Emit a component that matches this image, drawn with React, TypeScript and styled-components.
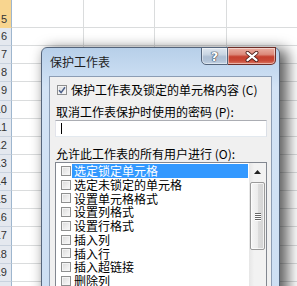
import React from "react";
import styled, { createGlobalStyle } from "styled-components";

const GlobalStyle = createGlobalStyle`
  * { box-sizing: border-box; }
  html, body { margin: 0; padding: 0; background: #fff; overflow: hidden; }
  body { font-family: "Noto Sans CJK SC", "Noto Sans", sans-serif; }
`;

const Screen = styled.div`
  position: relative;
  width: 297px;
  height: 286px;
  overflow: hidden;
  background: #fff;
`;

const Sheet = styled.div`
  display: grid;
  grid-template-columns: 12px repeat(4, 71.7px);
  grid-template-rows: 28px repeat(15, 18.14px);
`;

const RowHead = styled.div<{ $selected?: boolean; $first?: boolean }>`
  display: flex;
  justify-content: flex-end;
  align-items: ${(p) => (p.$first ? "flex-end" : "center")};
  overflow: hidden;
  padding-right: 4px;
  background: ${(p) => (p.$selected ? "#f8d58f" : "#e4e8ef")};
  border-right: 1px solid #9eb6ce;
  border-bottom: 1px solid ${(p) => (p.$selected ? "#f8d58f" : "#c9d2de")};
  font: 11px "Liberation Sans", Arial, sans-serif;
  line-height: 15px;
  color: #333;
  white-space: nowrap;
`;

const Cell = styled.div`
  border-right: 1px solid #dadcdd;
  border-bottom: 1px solid #dadcdd;
`;

const Dialog = styled.div`
  position: absolute;
  left: 41px;
  top: 47px;
  width: 239px;
  height: 262px;
  display: flex;
  flex-direction: column;
  padding: 0 7px;
  border: 1px solid #55657b;
  border-radius: 6px 6px 0 0;
  background: linear-gradient(180deg, #b7cfe9 0%, #c6daf0 22px, #d3e3f5 40px, #cddff3 100%);
  box-shadow: 6px 4px 14px 2px rgba(0, 0, 0, 0.62);
`;

const TitleBar = styled.div`
  height: 28px;
  display: flex;
  align-items: flex-start;
`;

const Title = styled.div`
  padding: 6px 0 0 1px;
  font-size: 12px;
  line-height: 16px;
  color: #1e1e1e;
`;

const Buttons = styled.div`
  margin: -1px -4px 0 auto;
  display: flex;
`;

const CapButton = styled.div<{ $close?: boolean }>`
  width: ${(p) => (p.$close ? "48px" : "27px")};
  height: 18px;
  display: flex;
  align-items: center;
  justify-content: center;
  border: 1px solid ${(p) => (p.$close ? "#6e2e28" : "#56667c")};
  border-left: ${(p) => (p.$close ? "0" : "1px solid #56667c")};
  border-radius: ${(p) => (p.$close ? "0 0 5px 0" : "0 0 0 5px")};
  background: ${(p) =>
    p.$close
      ? "linear-gradient(180deg, #eab0a4 0%, #dc8a7b 40%, #c5402f 55%, #c94a38 80%, #dc7b66 100%)"
      : "linear-gradient(180deg, #dfe7f0 0%, #c9d5e2 40%, #aebfd3 55%, #b2c3d7 80%, #c3d3e4 100%)"};
  box-shadow: inset 0 0 0 1px rgba(255, 255, 255, 0.45);
`;

const HelpGlyph = styled.span`
  font: bold 13px "DejaVu Sans", sans-serif;
  line-height: 13px;
  color: #fff;
  text-shadow: 0 0 1px #2a3548, 0 0 1px #2a3548, 0 0 1px #2a3548;
`;

const Client = styled.div`
  flex: 1;
  display: flex;
  flex-direction: column;
  padding: 5px 4px 0 0;
  background: #f0f0f0;
  border: 1px solid #8c9db4;
  border-bottom: 0;
  font-size: 12px;
  color: #000;
`;

const CheckRow = styled.div`
  display: flex;
  align-items: center;
  gap: 4px;
  height: 16px;
  padding-left: 7px;
  line-height: 16px;
  white-space: nowrap;
`;

const Box = styled.span`
  width: 10px;
  height: 10px;
  flex: none;
  display: flex;
  align-items: center;
  justify-content: center;
  border: 1px solid #8e8f8f;
  background: linear-gradient(135deg, #d9d9d9 0%, #eeeeee 60%, #fafafa 100%);
  box-shadow: inset 0 0 0 1px #f4f4f4;
`;

const Label = styled.div<{ $gap?: number }>`
  margin-top: ${(p) => p.$gap ?? 0}px;
  padding-left: 6px;
  height: 16px;
  line-height: 16px;
  white-space: nowrap;
`;

const TextBox = styled.div`
  margin-left: 5px;
  height: 17px;
  display: flex;
  align-items: center;
  padding-left: 5px;
  background: #fff;
  border: 1px solid #abadb3;
  border-left-color: #e2e3ea;
  border-right-color: #dbdfe6;
  border-bottom-color: #e3e9ef;
`;

const Caret = styled.span`
  width: 1px;
  height: 11px;
  background: #000;
`;

const ListBox = styled.div`
  margin-left: 5px;
  flex: 1;
  display: flex;
  background: #fff;
  border: 1px solid #828790;
  border-bottom: 0;
`;

const Items = styled.div`
  flex: 1;
  padding: 1px 1px 0 5px;
  display: flex;
  flex-direction: column;
`;

const Item = styled.div`
  height: 13.75px;
  display: flex;
  align-items: center;
  gap: 1px;
  flex: none;
`;

const ItemText = styled.span<{ $selected?: boolean }>`
  flex: 1;
  padding-left: 2px;
  line-height: 13.75px;
  white-space: nowrap;
  background: ${(p) => (p.$selected ? "#3399ff" : "transparent")};
  color: ${(p) => (p.$selected ? "#fff" : "#000")};
`;

const ScrollBar = styled.div`
  width: 17px;
  display: flex;
  flex-direction: column;
  align-items: center;
  background: linear-gradient(90deg, #e6e6e6 0%, #f2f2f2 30%, #f2f2f2 100%);
`;

const Arrow = styled.div`
  height: 18px;
  width: 100%;
  display: flex;
  align-items: center;
  justify-content: center;
`;

const Thumb = styled.div`
  margin-top: 1px;
  width: 15px;
  height: 68px;
  display: flex;
  flex-direction: column;
  align-items: center;
  justify-content: center;
  gap: 1px;
  border: 1px solid #9a9a9a;
  border-radius: 2px;
  background: linear-gradient(90deg, #f6f6f6 0%, #ececec 50%, #dcdcdc 55%, #d3d3d3 100%);
  box-shadow: inset 0 0 0 1px rgba(255, 255, 255, 0.7);
`;

const Grip = styled.span`
  width: 6px;
  height: 1px;
  background: #666;
  box-shadow: 0 1px 0 #fff;
`;

const rows = [5, 6, 7, 8, 9, 10, 11, 12, 13, 14, 15, 16, 17, 18, 19, 20];

const items = [
  "选定锁定单元格",
  "选定未锁定的单元格",
  "设置单元格格式",
  "设置列格式",
  "设置行格式",
  "插入列",
  "插入行",
  "插入超链接",
  "删除列",
  "删除行",
];

export default function App() {
  return (
    <Screen>
      <GlobalStyle />
      <Sheet>
        {rows.map((r, i) => (
          <React.Fragment key={r}>
            <RowHead $selected={i === 0} $first={i === 0}>
              {r}
            </RowHead>
            <Cell />
            <Cell />
            <Cell />
            <Cell />
          </React.Fragment>
        ))}
      </Sheet>
      <Dialog>
        <TitleBar>
          <Title>保护工作表</Title>
          <Buttons>
            <CapButton>
              <HelpGlyph>?</HelpGlyph>
            </CapButton>
            <CapButton $close>
              <svg width="14" height="11" viewBox="0 0 14 11">
                <path d="M2.5 1.8 L11.5 9.2 M11.5 1.8 L2.5 9.2" stroke="#4a1c17" strokeWidth="3.8" strokeLinecap="round" />
                <path d="M2.5 1.8 L11.5 9.2 M11.5 1.8 L2.5 9.2" stroke="#fff" strokeWidth="2.2" strokeLinecap="round" />
              </svg>
            </CapButton>
          </Buttons>
        </TitleBar>
        <Client>
          <CheckRow>
            <Box>
              <svg width="8" height="8" viewBox="0 0 8 8">
                <path d="M1 4.2 L3.1 6.6 L7 1.2" stroke="#4b5f88" strokeWidth="1.5" fill="none" />
              </svg>
            </Box>
            保护工作表及锁定的单元格内容 (C)
          </CheckRow>
          <Label $gap={6}>取消工作表保护时使用的密码 (P):</Label>
          <TextBox>
            <Caret />
          </TextBox>
          <Label $gap={9}>允许此工作表的所有用户进行 (O):</Label>
          <ListBox>
            <Items>
              {items.map((t, i) => (
                <Item key={t}>
                  <Box />
                  <ItemText $selected={i === 0}>{t}</ItemText>
                </Item>
              ))}
            </Items>
            <ScrollBar>
              <Arrow>
                <svg width="7" height="4" viewBox="0 0 7 4">
                  <path d="M0 4 L3.5 0 L7 4 Z" fill="#222" />
                </svg>
              </Arrow>
              <Thumb>
                <Grip />
                <Grip />
                <Grip />
                <Grip />
              </Thumb>
            </ScrollBar>
          </ListBox>
        </Client>
      </Dialog>
    </Screen>
  );
}
